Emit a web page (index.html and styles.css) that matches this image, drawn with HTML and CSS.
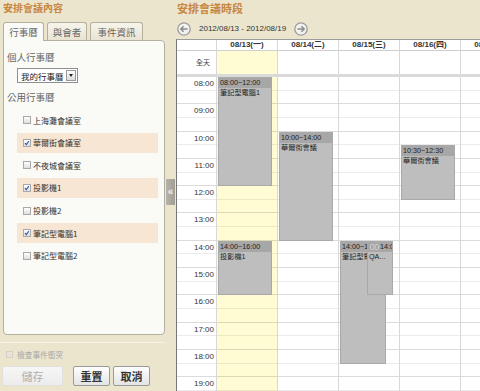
FILE: index.html
```html
<!DOCTYPE html>
<html lang="zh-Hant">
<head>
<meta charset="utf-8">
<title>安排會議</title>
<link rel="stylesheet" href="styles.css">
</head>
<body>
<div class="app">
  <aside class="side">
    <h2 class="title">安排會議內容</h2>
    <div class="tabs">
      <span class="tab tab-1 active">行事曆</span>
      <span class="tab tab-2">與會者</span>
      <span class="tab tab-3">事件資訊</span>
    </div>
    <div class="panel">
      <div class="label">個人行事曆</div>
      <div class="select"><span class="select-text">我的行事曆</span><span class="select-btn"></span></div>
      <div class="label label-2">公用行事曆</div>
      <ul class="list">
        <li class="item"><span class="cb"></span>上海灘會議室</li>
        <li class="item on"><span class="cb"><svg viewBox="0 0 8 8"><path d="M1.3 4.2 L3.1 6.2 L6.6 1.4"/></svg></span>華爾街會議室</li>
        <li class="item"><span class="cb"></span>不夜城會議室</li>
        <li class="item on"><span class="cb"><svg viewBox="0 0 8 8"><path d="M1.3 4.2 L3.1 6.2 L6.6 1.4"/></svg></span>投影機1</li>
        <li class="item"><span class="cb"></span>投影機2</li>
        <li class="item on"><span class="cb"><svg viewBox="0 0 8 8"><path d="M1.3 4.2 L3.1 6.2 L6.6 1.4"/></svg></span>筆記型電腦1</li>
        <li class="item"><span class="cb"></span>筆記型電腦2</li>
      </ul>
    </div>
    <div class="sep"></div>
    <div class="conflict"><span class="cb-small"></span>檢查事件衝突</div>
    <div class="buttons">
      <button class="btn btn-save" disabled>儲存</button>
      <button class="btn btn-reset">重置</button>
      <button class="btn btn-cancel">取消</button>
    </div>
  </aside>
  <div class="splitter"><span class="handle">«</span></div>
  <main class="cal">
    <h2 class="title cal-title">安排會議時段</h2>
    <div class="nav">
      <svg class="arrow" viewBox="0 0 14 14"><circle cx="7" cy="7" r="6.2"/><path d="M10.5 7 H3.8 M6.6 4.2 L3.8 7 L6.6 9.8"/></svg>
      <span class="range">2012/08/13 - 2012/08/19</span>
      <svg class="arrow arrow-r" viewBox="0 0 14 14"><circle cx="7" cy="7" r="6.2"/><path d="M3.5 7 H10.2 M7.4 4.2 L10.2 7 L7.4 9.8"/></svg>
    </div>
    <div class="grid">
      <div class="row head">
        <div class="cell time"></div>
        <div class="cell day">08/13(一)</div>
        <div class="cell day">08/14(二)</div>
        <div class="cell day">08/15(三)</div>
        <div class="cell day">08/16(四)</div>
        <div class="cell day">08/17(五)</div>
      </div>
      <div class="row allday">
        <div class="cell time">全天</div>
        <div class="cell day today"></div>
        <div class="cell day"></div>
        <div class="cell day"></div>
        <div class="cell day"></div>
        <div class="cell day"></div>
      </div>
      <div class="band"></div>
      <div class="row body">
        <div class="col time">
          <div class="hour">08:00</div>
          <div class="hour">09:00</div>
          <div class="hour">10:00</div>
          <div class="hour">11:00</div>
          <div class="hour">12:00</div>
          <div class="hour">13:00</div>
          <div class="hour">14:00</div>
          <div class="hour">15:00</div>
          <div class="hour">16:00</div>
          <div class="hour">17:00</div>
          <div class="hour">18:00</div>
          <div class="hour">19:00</div>
        </div>
        <div class="col day today">
          <div class="ev" style="top:0px;height:109.2px"><div class="ev-h">08:00~12:00</div><div class="ev-b">筆記型電腦1</div></div>
          <div class="ev" style="top:163.8px;height:54.6px"><div class="ev-h">14:00~16:00</div><div class="ev-b">投影機1</div></div>
        </div>
        <div class="col day">
          <div class="ev" style="top:54.6px;height:109.2px"><div class="ev-h">10:00~14:00</div><div class="ev-b">華爾街會議</div></div>
        </div>
        <div class="col day">
          <div class="ev ev-a" style="top:163.8px;height:122.85px"><div class="ev-h">14:00~18:30</div><div class="ev-b">筆記型電腦2</div></div>
          <div class="ev ev-b2" style="top:163.8px;height:54.6px"><div class="ev-h"><svg class="ev-icon" viewBox="0 0 9 6"><rect x="0.5" y="0.5" width="3.5" height="5" rx="1"/><rect x="5" y="0.5" width="3.5" height="5" rx="1"/></svg><span class="ev-t">14:00~16:00</span></div><div class="ev-b">QA...</div></div>
        </div>
        <div class="col day">
          <div class="ev" style="top:68.25px;height:54.6px"><div class="ev-h">10:30~12:30</div><div class="ev-b">華爾街會議</div></div>
        </div>
        <div class="col day"></div>
      </div>
    </div>
  </main>
</div>
</body>
</html>
```
FILE: styles.css
```css
* { box-sizing: border-box; margin: 0; padding: 0; }
html, body { width: 480px; height: 391px; overflow: hidden; }
body {
  background: #ebe5ce;
  font-family: "Liberation Sans", "Noto Sans CJK TC", sans-serif;
  color: #333;
}
.app { display: flex; height: 391px; }

/* ---------- left side ---------- */
.side { width: 165px; flex: none; display: flex; flex-direction: column; }
.title {
  font-size: 10px; font-weight: bold; color: #c8873e;
  line-height: 16px; height: 22px; padding-left: 3px;
  font-family: "Noto Sans CJK TC", sans-serif;
}
.tabs {
  display: flex; align-items: flex-start; gap: 3px;
  padding-left: 3px; height: 18px; position: relative; z-index: 1;
}
.tab {
  height: 18px; border: 1px solid #b5b09e; border-bottom: none;
  border-radius: 3px 3px 0 0;
  background: linear-gradient(#f7f4ec, #e8e3d2);
  font-size: 9.5px; color: #666;
  display: flex; align-items: center; justify-content: center;
  font-family: "Noto Sans CJK TC", sans-serif;
}
.tab-1 { width: 41px; }
.tab-2 { width: 40px; }
.tab-3 { width: 53px; }
.tab.active { background: #fafaf6; height: 19px; }
.panel {
  margin-left: 3px; width: 162px; height: 295px;
  border: 1px solid #b5b09e; border-radius: 0 4px 4px 4px;
  background: #fafaf6; padding-left: 3px;
}
.label {
  font-size: 9.5px; color: #666; line-height: 12px; margin-top: 10px;
  font-family: "Noto Sans CJK TC", sans-serif;
}
.label-2 { margin-top: 8px; }
.select {
  margin: 5px 0 0 10px; width: 61px; height: 15px;
  border: 1px solid #8f8f8f; background: #fff;
  display: flex; align-items: center; justify-content: space-between;
  padding: 0 1px 0 3px;
}
.select-text { font-size: 8.5px; color: #222; font-family: "Noto Sans CJK TC", sans-serif; line-height: 12px; }
.select-btn {
  width: 10px; height: 11px; border: 1px solid #999;
  background: linear-gradient(#fff, #dcdcdc);
  display: flex; align-items: center; justify-content: center;
}
.select-btn::after {
  content: ""; border-left: 2.5px solid transparent; border-right: 2.5px solid transparent;
  border-top: 3px solid #222;
}
.list { list-style: none; margin: 7px 0 0 10px; width: 141px; }
.item {
  height: 20px; margin-bottom: 2.67px; padding-left: 6px;
  display: flex; align-items: center;
  font-size: 8px; color: #333; font-family: "Noto Sans CJK TC", sans-serif;
}
.item.on { background: #f6e6d3; }
.cb {
  width: 8px; height: 8px; margin-right: 2px; flex: none;
  border: 1px solid #a9a9a9; background: linear-gradient(#fff, #dedede);
  display: flex;
}
.cb svg { width: 6px; height: 6px; }
.cb svg path { fill: none; stroke: #2c4fa6; stroke-width: 1.4; }
.sep { margin-top: 7px; height: 1px; background: #f6f2e4; }
.conflict {
  margin-top: 6px; height: 10px; padding-left: 6px;
  display: flex; align-items: center;
  font-size: 7.7px; color: #a8a8a8; font-family: "Noto Sans CJK TC", sans-serif;
}
.cb-small { width: 7px; height: 7px; border: 1px solid #d4d0c4; background: #e6e3da; margin-right: 4px; }
.buttons { margin-top: 7px; display: flex; height: 20px; }
.btn {
  height: 20px; border: 1px solid #9a9a9a; border-radius: 2px;
  background: linear-gradient(#ffffff, #e4e4e4);
  font-size: 11px; font-weight: bold; color: #333;
  font-family: "Noto Sans CJK TC", serif;
}
.btn-save {
  width: 61px; margin-left: 2px; border-color: #e2e0da;
  background: linear-gradient(#f6f6f6, #ececec); color: #b0b0b0; font-weight: normal;
}
.btn-reset { width: 37px; margin-left: 10px; }
.btn-cancel { width: 37px; margin-left: 3px; }

/* ---------- splitter ---------- */
.splitter { width: 11px; flex: none; }
.handle {
  display: flex; align-items: center; justify-content: center;
  margin: 179px 0 0 1px; width: 9px; height: 26px;
  background: linear-gradient(90deg, #b5b3aa, #9f9d94);
  color: #f0f0ea; font-size: 10px; font-weight: bold; line-height: 10px;
}

/* ---------- calendar ---------- */
.cal { width: 304px; flex: none; display: flex; flex-direction: column; }
.cal-title { font-size: 11px; height: 19px; padding-left: 1px; }
.nav { height: 20px; display: flex; align-items: flex-start; padding: 3px 0 0 1px; }
.arrow { width: 14px; height: 14px; flex: none; }
.arrow circle { fill: #f1f1ee; stroke: #9c9c9c; stroke-width: 1.3; }
.arrow path { fill: none; stroke: #8a8a8a; stroke-width: 1.4; }
.range { font-size: 8px; color: #333; line-height: 14px; margin: 0 8px; }
.grid {
  flex: 1; background: #fff;
  border-top: 1px solid #9c9c9c; border-left: 1px solid #767676;
  overflow: hidden;
}
.row { display: flex; }
.cell, .col { flex: none; border-right: 1px solid #d8d8d8; }
.time { width: 40px; }
.day { width: 61px; }
.head { height: 11px; border-bottom: 1px solid #cfcfcf; }
.head .cell {
  font-size: 8px; font-weight: bold; line-height: 10px; text-align: center;
  white-space: nowrap; overflow: hidden; color: #333;
}
.allday { height: 23px; }
.allday .time {
  font-size: 7px; color: #444; text-align: right; padding-right: 6px; line-height: 23px;
  font-family: "Noto Sans CJK TC", sans-serif;
}
.today { background-color: #fffcd3; }
.band { height: 3px; background: #dadada; }
.body { height: 400px; }
.col {
  position: relative; height: 330px;
  background-image: repeating-linear-gradient(to bottom,
    transparent 0, transparent 12.65px,
    rgba(0,0,0,0.08) 12.65px, rgba(0,0,0,0.08) 13.65px,
    transparent 13.65px, transparent 26.3px,
    rgba(0,0,0,0.14) 26.3px, rgba(0,0,0,0.14) 27.3px);
}
.hour {
  height: 27.3px; font-size: 8px; color: #333; text-align: right;
  padding-right: 2px; line-height: 13px;
}
.ev {
  position: absolute; left: 1px; width: 54px;
  background: #bebebe; border: 1px solid #a9a9a9;
  font-size: 7.2px; color: #1e1e1e; overflow: hidden;
  font-family: "Liberation Sans", "Noto Sans CJK TC", sans-serif;
}
.ev-h { background: #a7a7a7; height: 10px; line-height: 10px; padding-left: 1px; white-space: nowrap; overflow: hidden; }
.ev-b { line-height: 10px; padding-left: 1px; white-space: nowrap; overflow: hidden; }
.ev-a { width: 46px; }
.ev-a .ev-h, .ev-a .ev-b { width: 26px; }
.ev-b2 { left: 28px; width: 26px; }
.ev-b2 .ev-h { display: flex; align-items: center; }
.ev-icon { width: 9px; height: 6px; flex: none; margin: 0 1px 0 1px; }
.ev-icon rect { fill: none; stroke: #d4d4d4; stroke-width: 0.8; }
.ev-t { flex: none; }
```
